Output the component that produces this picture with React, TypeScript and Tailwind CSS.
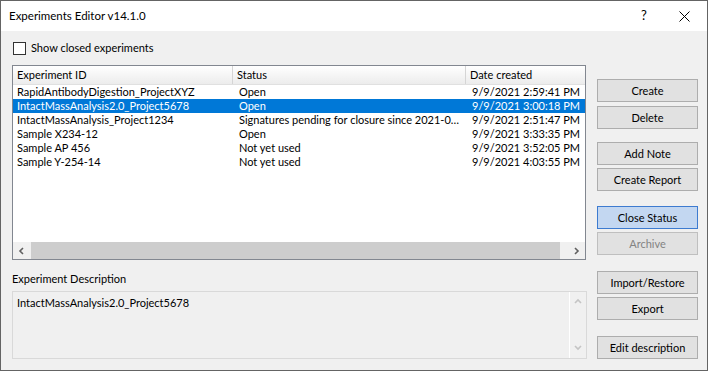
import React from "react";

type Row = { id: string; status: string; date: string };

const rows: Row[] = [
  { id: "RapidAntibodyDigestion_ProjectXYZ", status: "Open", date: "9/9/2021 2:59:41 PM" },
  { id: "IntactMassAnalysis2.0_Project5678", status: "Open", date: "9/9/2021 3:00:18 PM" },
  {
    id: "IntactMassAnalysis_Project1234",
    status: "Signatures pending for closure since 2021-09-09 14:51",
    date: "9/9/2021 2:51:47 PM",
  },
  { id: "Sample X234-12", status: "Open", date: "9/9/2021 3:33:35 PM" },
  { id: "Sample AP 456", status: "Not yet used", date: "9/9/2021 3:52:05 PM" },
  { id: "Sample Y-254-14", status: "Not yet used", date: "9/9/2021 4:03:55 PM" },
];

function Btn({
  label,
  className = "",
  variant = "normal",
}: {
  label: string;
  className?: string;
  variant?: "normal" | "focus" | "disabled";
}) {
  const look =
    variant === "focus"
      ? "bg-[#c3d7f1] border-[#3d7bd0] text-black"
      : variant === "disabled"
        ? "bg-[#e1e1e1] border-[#bfbfbf] text-[#838383]"
        : "bg-[#e1e1e1] border-[#adadad] text-black";
  return (
    <button
      type="button"
      className={`w-[101px] h-[23px] border flex items-center justify-center text-[11px] leading-none ${look} ${className}`}
    >
      {label}
    </button>
  );
}

function Chevron({ dir, color = "#606060" }: { dir: "left" | "right" | "up" | "down"; color?: string }) {
  const d = {
    left: "M5 1 L2 4 L5 7",
    right: "M2 1 L5 4 L2 7",
    up: "M1 5 L4 2 L7 5",
    down: "M1 2 L4 5 L7 2",
  }[dir];
  return (
    <svg width="8" height="8" viewBox="0 0 8 8">
      <path d={d} fill="none" stroke={color} strokeWidth="1.6" />
    </svg>
  );
}

export default function App() {
  return (
    <div className="w-[712px] h-[375px] bg-white font-['Lato',sans-serif] text-[11px] text-black">
      <div className="w-[708px] h-[371px] border border-[#646464] flex flex-col bg-[#f0f0f0]">
        {/* title bar */}
        <div className="h-[30px] bg-white flex items-center shrink-0">
          <span className="pl-[8px] flex-1 text-[11.5px]">Experiments Editor v14.1.0</span>
          <span className="w-[20px] text-center mr-[25px] text-[13px]">?</span>
          <svg width="11" height="11" viewBox="0 0 11 11" className="mr-[17px]">
            <path d="M0.5 0.5 L10.5 10.5 M10.5 0.5 L0.5 10.5" stroke="#000" strokeWidth="1" />
          </svg>
        </div>

        <div className="flex pl-[11px] pr-[9px]">
          {/* left column */}
          <div className="w-[575px] flex flex-col">
            <label className="flex items-center mt-[11px] h-[13px]">
              <span className="w-[13px] h-[13px] border border-[#333] bg-white ml-[1px]" />
              <span className="ml-[5px]">Show closed experiments</span>
            </label>

            {/* list view */}
            <div className="mt-[10px] w-[574px] h-[195px] border border-[#828790] bg-white flex flex-col">
              <div className="h-[19px] flex bg-gradient-to-b from-[#ffffff] to-[#ececec] border-b border-[#e0e0e0]">
                <div className="w-[220px] pl-[4px] flex items-center border-r border-[#d5d5d5]">Experiment ID</div>
                <div className="w-[233px] pl-[4px] flex items-center border-r border-[#d5d5d5]">Status</div>
                <div className="flex-1 pl-[4px] flex items-center">Date created</div>
              </div>
              <div className="flex-1">
                {rows.map((r, i) => {
                  const sel = i === 1;
                  return (
                    <div
                      key={r.id}
                      className={`h-[14px] flex items-center leading-[14px] ${sel ? "bg-[#0078d7] text-white" : ""}`}
                    >
                      <div className="w-[220px] pl-[4px] truncate">{r.id}</div>
                      <div className="w-[227px] pl-[6px] truncate">{r.status}</div>
                      <div className="flex-1 pl-[12px] truncate">{r.date}</div>
                    </div>
                  );
                })}
              </div>
              {/* horizontal scrollbar */}
              <div className="h-[17px] flex items-center bg-[#f0f0f0]">
                <div className="w-[18px] h-full flex items-center justify-center">
                  <Chevron dir="left" />
                </div>
                <div className="w-[529px] h-full bg-[#cdcdcd]" />
                <div className="flex-1 h-full flex items-center justify-end pr-[4px]">
                  <Chevron dir="right" />
                </div>
              </div>
            </div>

            <div className="mt-[12px] h-[14px] flex items-center">Experiment Description</div>

            <div className="mt-[5px] h-[68px] border border-[#d9d9d9] flex">
              <div className="flex-1 pl-[4px] pt-[3px]">IntactMassAnalysis2.0_Project5678</div>
              <div className="w-[17px] border-l border-white flex flex-col justify-between items-center py-[6px]">
                <Chevron dir="up" color="#c4c4c4" />
                <Chevron dir="down" color="#c4c4c4" />
              </div>
            </div>
          </div>

          {/* right column */}
          <div className="ml-[10px] flex flex-col pt-[48px]">
            <Btn label="Create" />
            <Btn label="Delete" className="mt-[4px]" />
            <Btn label="Add Note" className="mt-[13px]" />
            <Btn label="Create Report" className="mt-[3px]" />
            <Btn label="Close Status" variant="focus" className="mt-[15px]" />
            <Btn label="Archive" variant="disabled" className="mt-[3px]" />
            <Btn label="Import/Restore" className="mt-[16px]" />
            <Btn label="Export" className="mt-[3px]" />
            <Btn label="Edit description" className="mt-[16px]" />
          </div>
        </div>
      </div>
    </div>
  );
}
